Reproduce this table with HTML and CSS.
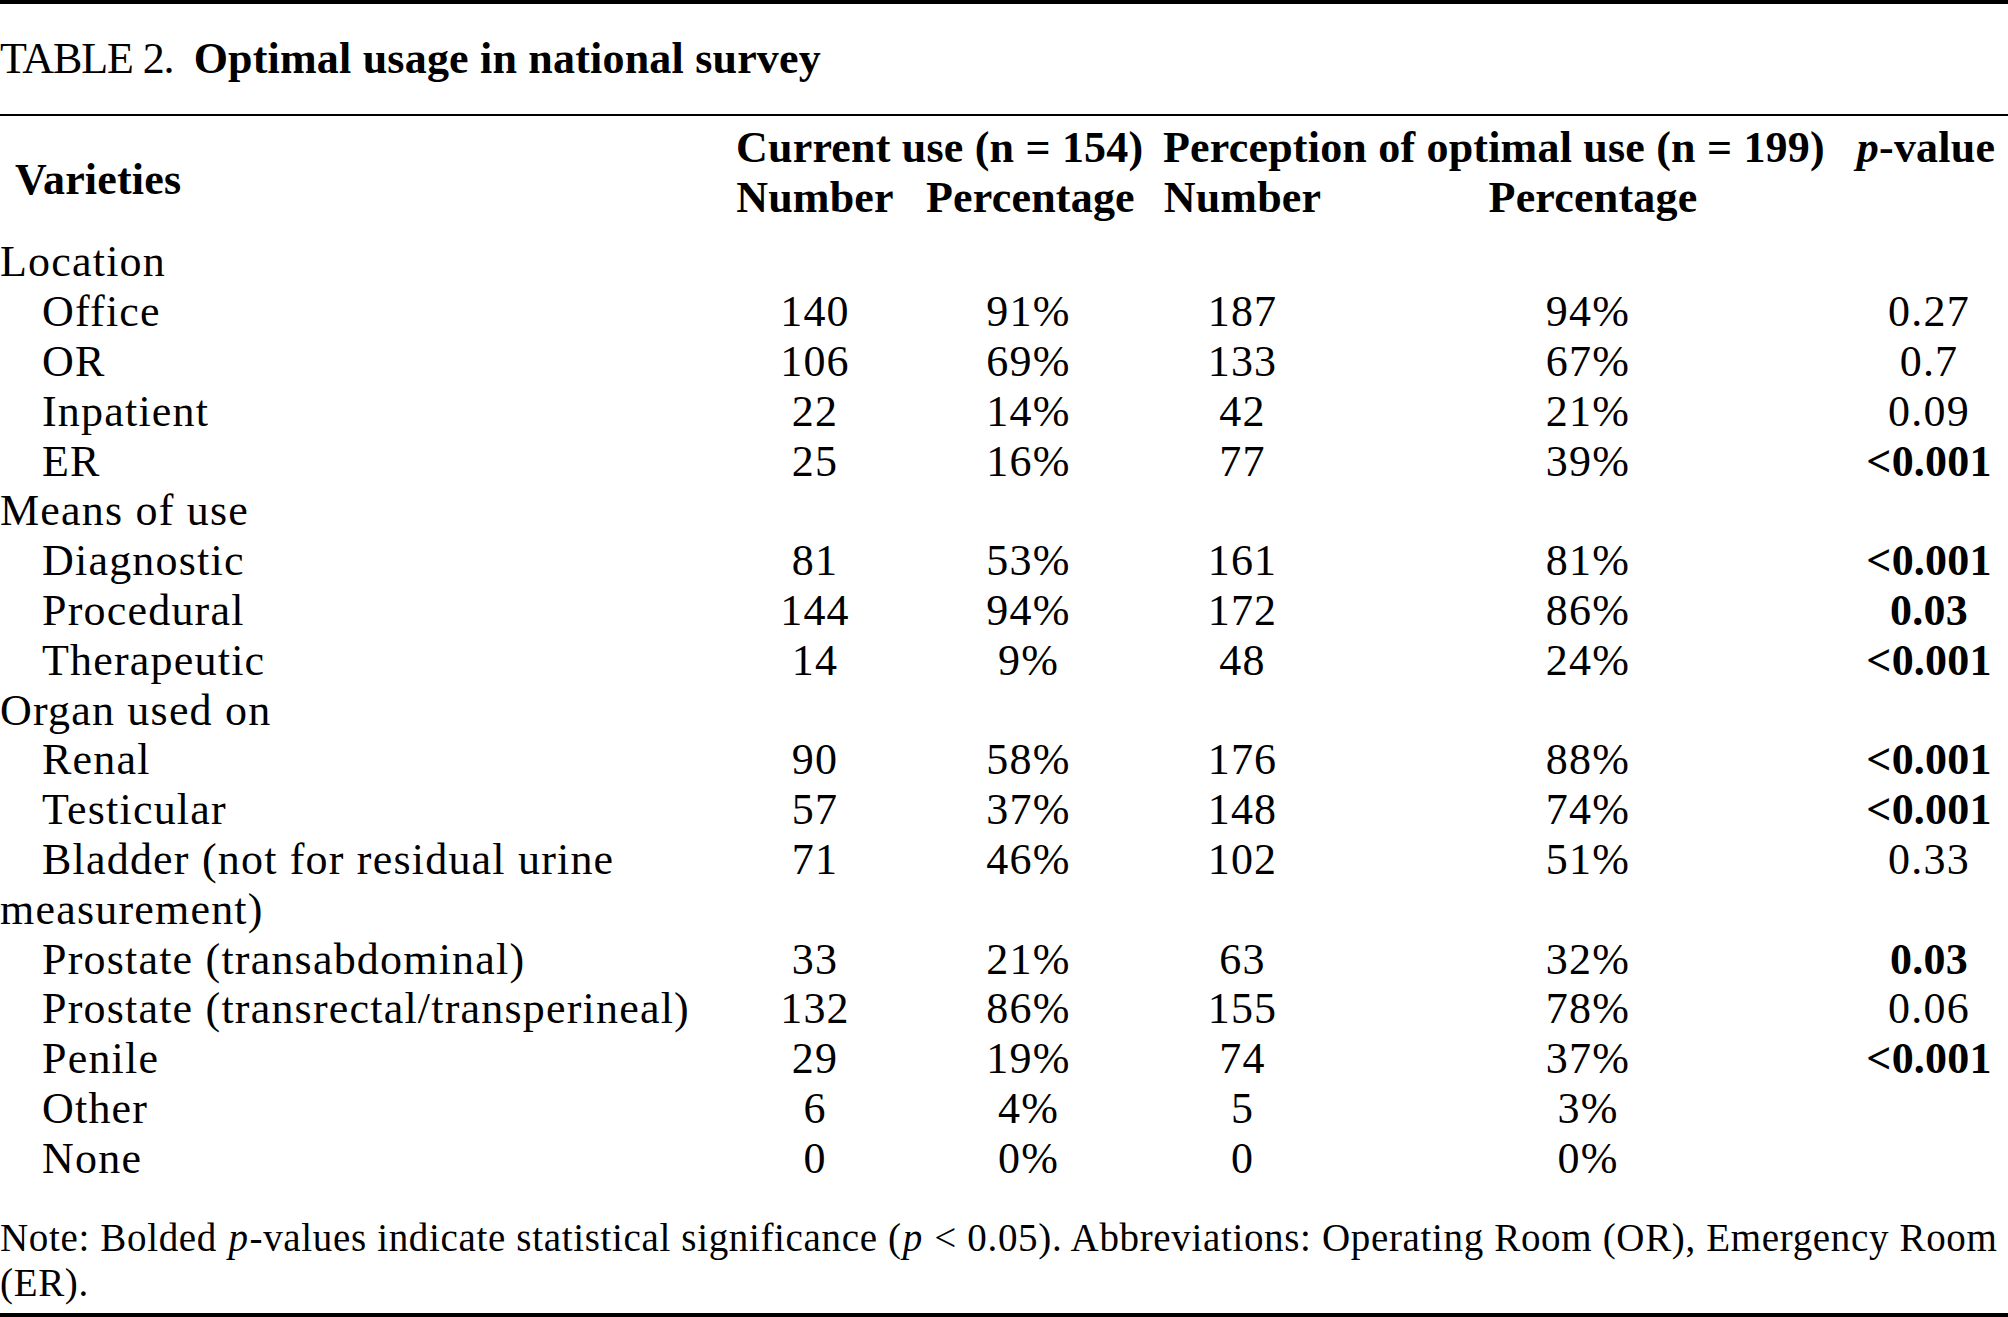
FILE: index.html
```html
<!DOCTYPE html>
<html lang="en">
<head>
<meta charset="utf-8">
<title>Table 2</title>
<link rel="stylesheet" href="styles.css">
</head>
<body>
<div class="page">
  <div class="rule rule-top"></div>
  <div class="caption"><span class="label">TABLE 2.</span> <b>Optimal usage in national survey</b></div>
  <div class="rule rule-mid"></div>
  <table class="data">
    <colgroup>
      <col class="c-var">
      <col class="c-n1">
      <col class="c-p1">
      <col class="c-n2">
      <col class="c-p2">
      <col class="c-pv">
    </colgroup>
    <thead>
      <tr>
        <th rowspan="2" class="varieties">Varieties</th>
        <th colspan="2" class="group">Current use (n = 154)</th>
        <th colspan="2" class="group">Perception of optimal use (n = 199)</th>
        <th class="pv"><i>p</i>-value</th>
      </tr>
      <tr class="sub">
        <th>Number</th>
        <th>Percentage</th>
        <th>Number</th>
        <th class="wide">Percentage</th>
        <th class="pv"></th>
      </tr>
    </thead>
    <tbody>
      <tr><td class="cat" colspan="6">Location</td></tr>
      <tr><td class="item">Office</td><td>140</td><td>91%</td><td>187</td><td>94%</td><td class="pv">0.27</td></tr>
      <tr><td class="item">OR</td><td>106</td><td>69%</td><td>133</td><td>67%</td><td class="pv">0.7</td></tr>
      <tr><td class="item">Inpatient</td><td>22</td><td>14%</td><td>42</td><td>21%</td><td class="pv">0.09</td></tr>
      <tr><td class="item">ER</td><td>25</td><td>16%</td><td>77</td><td>39%</td><td class="pv sig">&lt;0.001</td></tr>
      <tr><td class="cat" colspan="6">Means of use</td></tr>
      <tr><td class="item">Diagnostic</td><td>81</td><td>53%</td><td>161</td><td>81%</td><td class="pv sig">&lt;0.001</td></tr>
      <tr><td class="item">Procedural</td><td>144</td><td>94%</td><td>172</td><td>86%</td><td class="pv sig">0.03</td></tr>
      <tr><td class="item">Therapeutic</td><td>14</td><td>9%</td><td>48</td><td>24%</td><td class="pv sig">&lt;0.001</td></tr>
      <tr><td class="cat" colspan="6">Organ used on</td></tr>
      <tr><td class="item">Renal</td><td>90</td><td>58%</td><td>176</td><td>88%</td><td class="pv sig">&lt;0.001</td></tr>
      <tr><td class="item">Testicular</td><td>57</td><td>37%</td><td>148</td><td>74%</td><td class="pv sig">&lt;0.001</td></tr>
      <tr><td class="item">Bladder (not for residual urine measurement)</td><td>71</td><td>46%</td><td>102</td><td>51%</td><td class="pv">0.33</td></tr>
      <tr><td class="item">Prostate (transabdominal)</td><td>33</td><td>21%</td><td>63</td><td>32%</td><td class="pv sig">0.03</td></tr>
      <tr><td class="item">Prostate (transrectal/transperineal)</td><td>132</td><td>86%</td><td>155</td><td>78%</td><td class="pv">0.06</td></tr>
      <tr><td class="item">Penile</td><td>29</td><td>19%</td><td>74</td><td>37%</td><td class="pv sig">&lt;0.001</td></tr>
      <tr><td class="item">Other</td><td>6</td><td>4%</td><td>5</td><td>3%</td><td class="pv"></td></tr>
      <tr><td class="item">None</td><td>0</td><td>0%</td><td>0</td><td>0%</td><td class="pv"></td></tr>
    </tbody>
  </table>
  <p class="note">Note: Bolded <i>p</i>-values indicate statistical significance (<i>p</i> &lt; 0.05). Abbreviations: Operating Room (OR), Emergency Room (ER).</p>
  <div class="rule rule-bottom"></div>
</div>
</body>
</html>
```

FILE: styles.css
```css
html, body {
  margin: 0;
  padding: 0;
  background: #ffffff;
}

body {
  font-family: "Liberation Serif", "Times New Roman", serif;
  font-size: 44px;
  letter-spacing: 1.2px;
  color: #000000;
}

b, th {
  letter-spacing: 0.2px;
}

.page {
  width: 2008px;
  height: 1317px;
  overflow: hidden;
  display: flex;
  flex-direction: column;
}

.rule {
  background: #000000;
  flex: none;
}

.rule-top {
  height: 4px;
}

.caption {
  margin-top: 30px;
  line-height: 49.8px;
  white-space: nowrap;
}

.caption .label {
  letter-spacing: -1.1px;
  margin-right: 8px;
}

.caption b {
  font-weight: bold;
}

.rule-mid {
  margin-top: 30px;
  height: 2px;
}

.data {
  margin-top: 7px;
  width: 2008px;
  table-layout: fixed;
  border-collapse: collapse;
  border-spacing: 0;
}

.c-var { width: 720px; }
.c-n1 { width: 190px; }
.c-p1 { width: 237px; }
.c-n2 { width: 191px; }
.c-p2 { width: 500px; }
.c-pv { width: 170px; }

.data th,
.data td {
  padding: 0 16px;
  line-height: 49.8px;
  text-align: center;
  vertical-align: top;
  white-space: nowrap;
}

.data th {
  font-weight: bold;
}

.data th.varieties {
  text-align: left;
  vertical-align: middle;
  padding-left: 15px;
}

.data th.group {
  text-align: left;
}

.data tr.sub th {
  padding-bottom: 15px;
}

.data tr.sub th.wide {
  padding-left: 26px;
}

.data th.pv {
  padding: 0 0 0 6px;
}

.data td.pv {
  padding: 0 0 0 12px;
}

.data td.cat {
  text-align: left;
  padding-left: 0;
}

.data td.item {
  text-align: left;
  padding-left: 0;
  text-indent: 42px;
  white-space: normal;
}

.data td.sig {
  font-weight: bold;
  letter-spacing: 0.2px;
}

.note {
  margin: 31px 0 0 0;
  font-size: 39px;
  letter-spacing: 0.66px;
  line-height: 45px;
}

.note i {
  padding: 0 1px;
}

.rule-bottom {
  margin-top: 8px;
  height: 5px;
}
```
